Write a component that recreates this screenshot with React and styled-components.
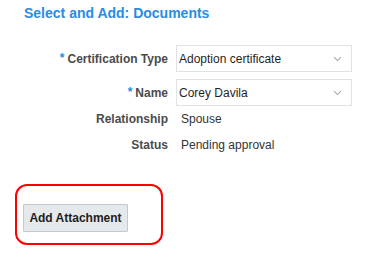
import React from "react";
import styled, { createGlobalStyle } from "styled-components";

const Global = createGlobalStyle`
  html, body { margin: 0; padding: 0; background: #fff; }
  body { font-family: "Liberation Sans", Arial, sans-serif; }
`;

const Page = styled.div`
  width: 378px;
  height: 262px;
  box-sizing: border-box;
  padding: 5px 0 0 24px;
  display: flex;
  flex-direction: column;
`;

const Title = styled.h1`
  margin: 0;
  font-size: 14px;
  line-height: 17px;
  font-weight: bold;
  color: #2a8be2;
`;

const Form = styled.div`
  display: flex;
  flex-direction: column;
  margin-top: 23px;
`;

const Row = styled.div`
  display: flex;
  align-items: center;
  height: ${(p) => p.$h}px;
  margin-top: ${(p) => p.$mt || 0}px;
`;

const Label = styled.div`
  width: 144px;
  flex: none;
  text-align: right;
  font-size: 12px;
  font-weight: bold;
  color: #4b4b4b;
  white-space: nowrap;
  margin-right: 8px;
`;

const Req = styled.span`
  color: #2a8be2;
  font-size: 12px;
  margin-right: 3px;
  vertical-align: 1px;
`;

const Select = styled.div`
  box-sizing: border-box;
  width: 176px;
  height: 27px;
  border: 1px solid #dfe3e6;
  background: #fff;
  display: flex;
  align-items: center;
  justify-content: space-between;
  padding: 0 9px 0 2px;
  font-size: 12px;
  color: #1f1f1f;
`;

const Value = styled.div`
  font-size: 12px;
  color: #333;
  padding-left: 5px;
`;

const Chevron = () => (
  <svg width="9" height="6" viewBox="0 0 9 6">
    <path d="M1 1.2 L4.5 4.6 L8 1.2" fill="none" stroke="#a3a8ad" strokeWidth="1.1" />
  </svg>
);

const Highlight = styled.div`
  margin: 26px 0 0 -9px;
  width: 148px;
  height: 61px;
  box-sizing: border-box;
  border: 2px solid #ff0000;
  border-radius: 12px;
  display: flex;
  align-items: flex-start;
  padding: 18px 0 0 6px;
`;

const Button = styled.button`
  height: 28px;
  width: 105px;
  box-sizing: border-box;
  border: 1px solid #c4c9ce;
  background: #e6e9ec;
  font-family: "Liberation Sans", Arial, sans-serif;
  font-size: 12px;
  font-weight: bold;
  color: #1e1e1e;
  padding: 0;
  border-radius: 1px;
`;

export default function App() {
  return (
    <>
      <Global />
      <Page>
        <Title>Select and Add: Documents</Title>
        <Form>
          <Row $h={27}>
            <Label><Req>*</Req>Certification Type</Label>
            <Select>
              <span>Adoption certificate</span>
              <Chevron />
            </Select>
          </Row>
          <Row $h={27} $mt={7}>
            <Label><Req>*</Req>Name</Label>
            <Select>
              <span>Corey Davila</span>
              <Chevron />
            </Select>
          </Row>
          <Row $h={26}>
            <Label>Relationship</Label>
            <Value>Spouse</Value>
          </Row>
          <Row $h={26}>
            <Label>Status</Label>
            <Value>Pending approval</Value>
          </Row>
        </Form>
        <Highlight>
          <Button>Add Attachment</Button>
        </Highlight>
      </Page>
    </>
  );
}
